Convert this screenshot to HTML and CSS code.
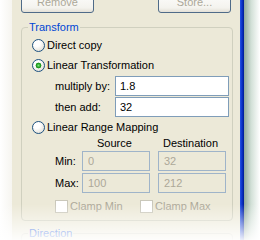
FILE: index.html
```html
<!DOCTYPE html>
<html lang="en">
  <head>
    <meta charset="UTF-8" />
    <title>Transform</title>
    <link rel="stylesheet" href="styles.css">
  </head>
  <body>
    <div class="screen">
      <div class="edge-left"></div>

      <div class="dialog">
        <!-- buttons of the section above, cut off -->
        <div class="button-row">
          <button class="xp-button" disabled>Remove</button>
          <button class="xp-button" disabled>Store...</button>
        </div>

        <fieldset class="group">
          <legend>Transform</legend>
          <div class="group-body">
            <label class="option">
              <span class="radio"></span>Direct copy
            </label>
            <label class="option">
              <span class="radio checked"></span>Linear Transformation
            </label>

            <div class="field-row">
              <span class="field-label">multiply by:</span>
              <input class="xp-input" type="text" value="1.8">
            </div>
            <div class="field-row">
              <span class="field-label">then add:</span>
              <input class="xp-input" type="text" value="32">
            </div>

            <label class="option">
              <span class="radio"></span>Linear Range Mapping
            </label>

            <div class="range">
              <span></span>
              <span class="range-head source">Source</span>
              <span class="range-head dest">Destination</span>

              <span class="range-label">Min:</span>
              <input class="xp-input" type="text" value="0" disabled>
              <input class="xp-input" type="text" value="32" disabled>

              <span class="range-label">Max:</span>
              <input class="xp-input" type="text" value="100" disabled>
              <input class="xp-input" type="text" value="212" disabled>
            </div>

            <div class="clamp-row">
              <label class="check-option clamp-min">
                <span class="checkbox"></span>Clamp Min
              </label>
              <label class="check-option">
                <span class="checkbox"></span>Clamp Max
              </label>
            </div>
          </div>
        </fieldset>

        <fieldset class="group next">
          <legend>Direction</legend>
          <div class="group-body"></div>
        </fieldset>
      </div>

      <div class="frame"></div>
      <div class="shadow"></div>

      <div class="fade"></div>
    </div>
  </body>
</html>
```

FILE: styles.css
```css
body {
  margin: 0;
  width: 260px;
  height: 240px;
  overflow: hidden;
  background: #fff;
  font-family: "Liberation Sans", Arial, sans-serif;
  font-size: 11px;
  color: #000;
}

.screen {
  position: relative;
  display: flex;
  height: 240px;
  overflow: hidden;
}

.edge-left {
  width: 12px;
  background: linear-gradient(to right, #fff, #f6f5f0);
}

.dialog {
  width: 228px;
  box-sizing: border-box;
  padding: 0 7px 0 9px;
  background: #ece9d8;
}

.frame {
  width: 4px;
  background: linear-gradient(to right, #2453e6, #0a32c8 50%, #001c92);
}

.shadow {
  flex: 1;
  background: linear-gradient(to right, #8fa99b, #d2e0d7 45%, #fff);
}

.fade {
  position: absolute;
  left: 0;
  right: 0;
  bottom: 0;
  height: 36px;
  background: linear-gradient(rgba(255, 255, 255, 0), rgba(255, 255, 255, 0.92));
}

/* top buttons */
.button-row {
  display: flex;
  justify-content: space-between;
  height: 23px;
  margin-top: -10px;
  padding-right: 2px;
}

.xp-button {
  width: 73px;
  height: 23px;
  padding: 0;
  border: 1px solid #4f6b88;
  border-radius: 3px;
  background: linear-gradient(#fff, #f4f3ee 80%, #e3e0d6);
  font-family: inherit;
  font-size: 11px;
  color: #aca899;
}

/* group box */
.group {
  margin: 7px 0 0;
  padding: 0;
  min-width: 0;
  border: 1px solid #d0d0bf;
  border-radius: 4px;
}

.group legend {
  margin-left: 6px;
  padding: 0 1px;
  line-height: 14px;
  color: #0046d5;
}

.group.next {
  margin-top: 5px;
  height: 40px;
}

.group-body {
  padding: 1px 3px 4px 10px;
}

.option {
  display: flex;
  align-items: center;
  gap: 2px;
  height: 20px;
}

.radio {
  width: 13px;
  height: 13px;
  box-sizing: border-box;
  border: 1px solid #1c5180;
  border-radius: 50%;
  background: radial-gradient(circle at 35% 30%, #fff 30%, #e6e4dc 75%, #d6d3c8);
}

.radio.checked {
  background:
    radial-gradient(circle at 50% 50%, #7ee07e 0, #21a121 2px, #1a8a1a 2.6px, transparent 3.2px),
    radial-gradient(circle at 35% 30%, #fff 30%, #e6e4dc 75%, #d6d3c8);
}

.field-row {
  display: flex;
  align-items: center;
  margin-top: 1px;
  padding-left: 23px;
}

.field-row .field-label {
  width: 60px;
}

.field-row .xp-input {
  flex: 1;
}

.xp-input {
  height: 20px;
  box-sizing: border-box;
  margin: 0;
  padding: 0 0 0 4px;
  border: 1px solid #7f9db9;
  background: #fff;
  font-family: inherit;
  font-size: 11px;
  color: #000;
  min-width: 0;
}

.xp-input:disabled {
  border-color: #9fb4c9;
  background: #ece9d8;
  color: #aca899;
  padding-left: 5px;
}

/* range mapping */
.range {
  display: grid;
  grid-template-columns: 19px 68px 68px;
  column-gap: 8px;
  row-gap: 2px;
  align-items: center;
  padding-left: 23px;
}

.range-head {
  line-height: 13px;
  margin-bottom: -1px;
}

.range-head.source {
  padding-left: 15px;
}

.range-head.dest {
  padding-left: 5px;
}

.clamp-row {
  display: flex;
  align-items: center;
  height: 20px;
  margin-top: 3px;
  padding-left: 23px;
}

.check-option {
  display: flex;
  align-items: center;
  gap: 2px;
  color: #aca899;
}

.clamp-min {
  width: 85px;
}

.checkbox {
  width: 13px;
  height: 13px;
  box-sizing: border-box;
  border: 1px solid #cac8bb;
  background: #fff;
}
```
